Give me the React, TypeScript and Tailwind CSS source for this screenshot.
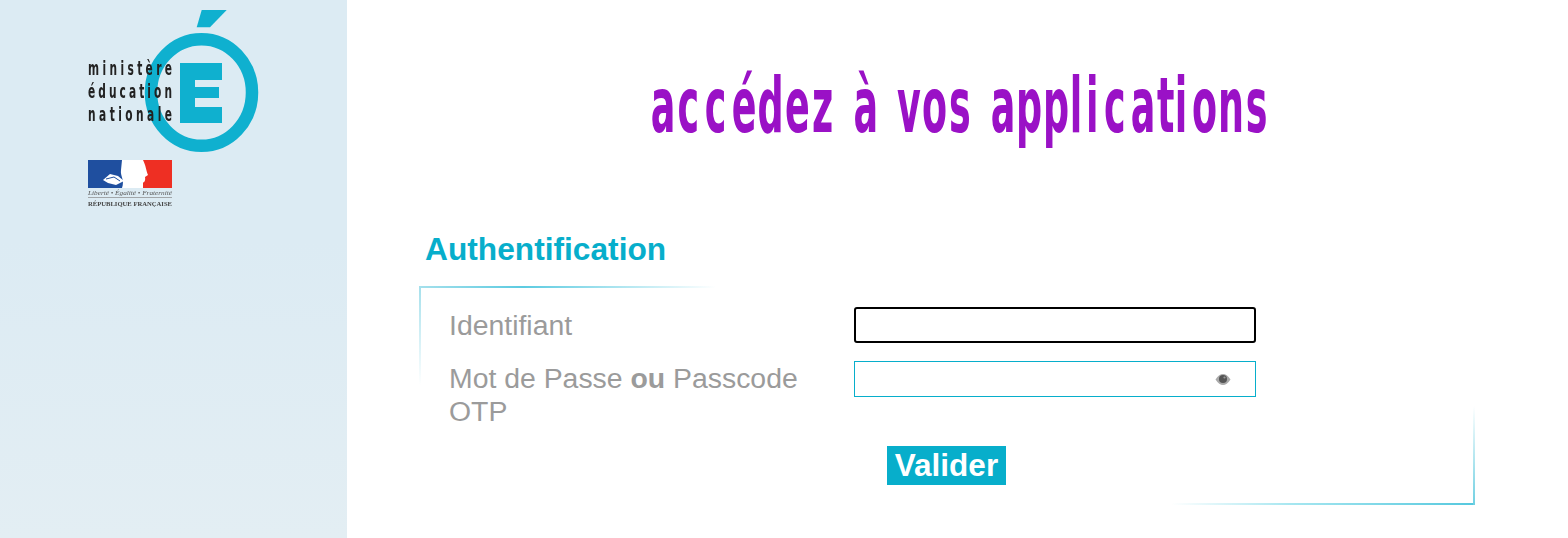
import React from "react";

const BANNER_SCALE = 0.48;
const BANNER_X = [
  650.3, 676.9, 704.3, 731.3, 757, 784.6, 811.5, 840, 852.9, 880, 896.5, 921.6, 948.6, 975,
  990.3, 1015.5, 1042.5, 1069.2, 1085.5, 1103.6, 1130.3, 1156.5, 1174.2, 1191.6, 1217.5, 1245.3,
];

function MinistryLogo() {
  return (
    <svg viewBox="80 0 185 215" className="w-[185px] h-[215px] block blur-[0.6px]">
      <polygon points="201.7,10 226.7,10 210,27.3 196.7,27.3" fill="#0fb0cf" />
      <ellipse cx="201.5" cy="92.5" rx="50.5" ry="53.3" fill="none" stroke="#0fb0cf" strokeWidth="12.5" />
      <path d="M180 63H222V80H195V87H219V98H195V107H222V123H180Z" fill="#0fb0cf" />
      <g fill="#222" fontFamily="'DejaVu Sans', sans-serif" fontWeight="700" fontSize="19">
        <text transform="translate(88 75) scale(.56 1)" textLength="150" lengthAdjust="spacing">ministère</text>
        <text transform="translate(88 98) scale(.56 1)" textLength="150" lengthAdjust="spacing">éducation</text>
        <text transform="translate(88 121) scale(.56 1)" textLength="150" lengthAdjust="spacing">nationale</text>
      </g>
      <rect x="88" y="160" width="40" height="28" fill="#1f4f9f" />
      <rect x="124" y="160" width="20" height="28" fill="#fff" />
      <rect x="143" y="160" width="29" height="28" fill="#ee2f23" />
      <path d="M122 160H143C146 166 146 170 148 175L145 177C146 182 143 184 139 183L135 188H122C125 180 120 176 121 170Z" fill="#fff" />
      <path d="M103 180L110 174L118 176L124 181L116 185L108 183Z" fill="#fff" />
      <path d="M106 179L114 177L120 181" fill="none" stroke="#1f4f9f" strokeWidth="1" />
      <text x="88" y="195" textLength="84" lengthAdjust="spacingAndGlyphs" fontFamily="'Liberation Serif', serif" fontStyle="italic" fontSize="6.5" fill="#555">Liberté • Égalité • Fraternité</text>
      <rect x="88" y="197" width="84" height="0.7" fill="#888" />
      <text x="88" y="206" textLength="84" lengthAdjust="spacingAndGlyphs" fontFamily="'Liberation Serif', serif" fontWeight="700" fontSize="6.5" fill="#444">RÉPUBLIQUE FRANÇAISE</text>
    </svg>
  );
}

function Banner() {
  return (
    <svg viewBox="647.5 70 620 80" className="w-[620px] h-[80px] block blur-[0.4px]">
      <text
        transform={`scale(${BANNER_SCALE} 1)`}
        x={BANNER_X.map((v) => (v / BANNER_SCALE).toFixed(1)).join(" ")}
        y="131.7"
        fontFamily="'DejaVu Sans', sans-serif"
        fontWeight="700"
        fontSize="76"
        fill="#9a11c6"
      >
        accédez à vos applications
      </text>
    </svg>
  );
}

function EyeIcon() {
  return (
    <svg viewBox="0 0 16 13" className="w-4 h-[13px] block">
      <path d="M0.5 6.5C3 2.5 5.5 1 8 1s5 1.5 7.5 5.5C13 10.5 10.5 12 8 12S3 10.5 .5 6.5Z" fill="#aaa" />
      <circle cx="8" cy="6" r="4" fill="#555" />
      <circle cx="9.5" cy="4.5" r="1.1" fill="#999" />
    </svg>
  );
}

export default function App() {
  return (
    <div className="flex h-[538px] w-full overflow-hidden bg-white font-['Liberation_Sans',Arial,sans-serif]">
      <aside className="w-[347px] shrink-0 bg-[linear-gradient(180deg,#dcebf3_0%,#dcebf3_45%,#e3eef3_100%)] pl-[80px]">
        <MinistryLogo />
      </aside>
      <main className="flex-1 flex flex-col pl-[72px]">
        <div className="-ml-[72px] flex justify-center pt-[70px] h-[146px]">
          <Banner />
        </div>
        <h1 className="ml-[6px] mt-[84px] text-[31.7px] leading-[38px] font-bold text-[#07aecb]">Authentification</h1>
        <section className="relative mt-[18px] w-[1056px] h-[219px] pl-[30px] pt-[21px]">
          <span className="absolute left-0 top-0 h-[2px] w-[297px] bg-[linear-gradient(90deg,#a5e0ec,#5ccbe1_35%,transparent)]" />
          <span className="absolute left-0 top-0 w-[2px] h-[99px] bg-[linear-gradient(180deg,#a5e0ec,transparent)]" />
          <span className="absolute right-0 bottom-0 h-[2px] w-[304px] bg-[linear-gradient(90deg,transparent,#a5e6f0_40%,#55c8de)]" />
          <span className="absolute right-0 bottom-0 w-[2px] h-[99px] bg-[linear-gradient(180deg,transparent,#70d0e2)]" />
          <div className="grid grid-cols-[405px_402px] gap-y-[18px]">
            <label className="pt-[2px] text-[28.4px] leading-[33px] text-[#9b9b9b]">Identifiant</label>
            <div className="h-[36px] border-2 border-black rounded-[3px] bg-white" />
            <label className="pr-[45px] pt-[1px] text-[28.4px] leading-[33px] text-[#9b9b9b]">
              Mot de Passe <b>ou</b> Passcode OTP
            </label>
            <div className="h-[36px] border border-[#07aecb] bg-white flex items-center justify-end pr-[24px]">
              <EyeIcon />
            </div>
          </div>
          <button className="mt-[18px] ml-[438px] block w-[119px] h-[39px] bg-[#07aecb] text-white font-bold text-[31.5px] leading-[39px]">
            Valider
          </button>
        </section>
      </main>
    </div>
  );
}
